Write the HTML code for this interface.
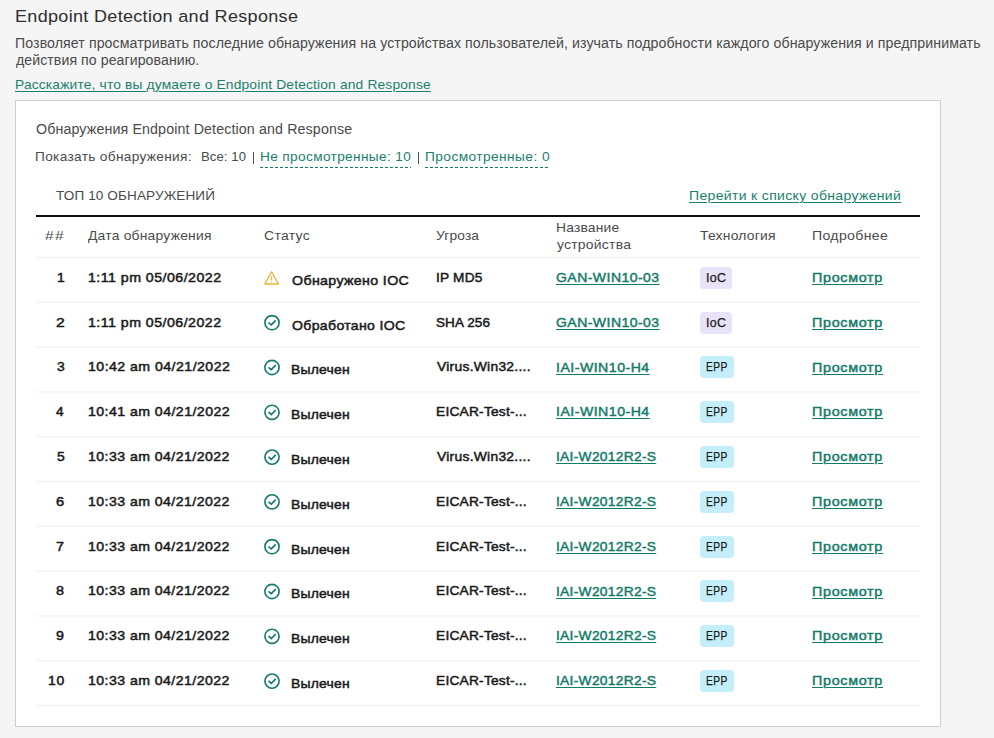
<!DOCTYPE html>
<html><head><meta charset="utf-8"><style>
html,body{margin:0;padding:0;}
body{width:994px;height:738px;background:#f5f5f5;position:relative;overflow:hidden;font-family:"Liberation Sans",sans-serif;}
.t{position:absolute;white-space:nowrap;line-height:1;transform-origin:0 0;}
.ul{text-decoration:underline;text-underline-offset:2px;text-decoration-thickness:1px;}
.card{position:absolute;left:15px;top:100px;width:924px;height:625px;border:1px solid #cfcfcf;background:#fff;}
.sep{position:absolute;left:36px;width:884px;height:1px;background:#efefef;}
.thick{position:absolute;left:36px;top:215px;width:884px;height:2px;background:#111;}
.badge{position:absolute;border-radius:4px;}
.ic{position:absolute;width:20px;height:20px;}
.ov{position:absolute;left:0;top:0;}
.dash{position:absolute;height:1px;background-image:linear-gradient(to right,#127a68 60%,transparent 60%);background-size:5px 1px;}
.bar{position:absolute;width:1px;background:#555;}
</style></head><body>
<div class="card"></div>
<div class="thick"></div>
<div class="dash" style="left:260px;top:167px;width:151px"></div>
<div class="dash" style="left:425px;top:167px;width:125px"></div>
<div class="bar" style="left:253px;top:151.5px;height:12px"></div>
<div class="bar" style="left:418px;top:151.5px;height:12px"></div>
<div class="badge" style="left:700.00px;top:266.70px;width:32px;height:22px;background:#e9e3f9"></div>
<div class="badge" style="left:700.00px;top:311.50px;width:32px;height:22px;background:#e9e3f9"></div>
<div class="badge" style="left:700.00px;top:356.30px;width:34px;height:22px;background:#c5eefb"></div>
<div class="badge" style="left:700.00px;top:401.10px;width:34px;height:22px;background:#c5eefb"></div>
<div class="badge" style="left:700.00px;top:445.90px;width:34px;height:22px;background:#c5eefb"></div>
<div class="badge" style="left:700.00px;top:490.70px;width:34px;height:22px;background:#c5eefb"></div>
<div class="badge" style="left:700.00px;top:535.50px;width:34px;height:22px;background:#c5eefb"></div>
<div class="badge" style="left:700.00px;top:580.30px;width:34px;height:22px;background:#c5eefb"></div>
<div class="badge" style="left:700.00px;top:625.10px;width:34px;height:22px;background:#c5eefb"></div>
<div class="badge" style="left:700.00px;top:669.90px;width:34px;height:22px;background:#c5eefb"></div>
<svg class="ov" width="994" height="738" viewBox="0 0 994 738">
<rect x="36" y="257.00" width="884" height="1" fill="#f0f0f0"/>
<rect x="36" y="301.80" width="884" height="1" fill="#f0f0f0"/>
<rect x="36" y="346.60" width="884" height="1" fill="#f0f0f0"/>
<rect x="36" y="391.40" width="884" height="1" fill="#f0f0f0"/>
<rect x="36" y="436.20" width="884" height="1" fill="#f0f0f0"/>
<rect x="36" y="481.00" width="884" height="1" fill="#f0f0f0"/>
<rect x="36" y="525.80" width="884" height="1" fill="#f0f0f0"/>
<rect x="36" y="570.60" width="884" height="1" fill="#f0f0f0"/>
<rect x="36" y="615.40" width="884" height="1" fill="#f0f0f0"/>
<rect x="36" y="660.20" width="884" height="1" fill="#f0f0f0"/>
<rect x="36" y="705.00" width="884" height="1" fill="#f0f0f0"/>
<path d="M271.6 271.80 L264.8 284.00 L278.4 284.00 Z" fill="none" stroke="#e8b52e" stroke-width="1.3" stroke-linejoin="round"/>
<path d="M271.6 276.20 V280.20" stroke="#e8b52e" stroke-width="1.2"/>
<circle cx="271.6" cy="281.60" r="0.7" fill="#e8b52e"/>
<circle cx="272.0" cy="322.70" r="7.1" fill="none" stroke="#15796b" stroke-width="1.6"/>
<path d="M268.5 322.60 L271.3 324.90 L275.7 320.40" fill="none" stroke="#15796b" stroke-width="1.7"/>
<circle cx="272.0" cy="367.50" r="7.1" fill="none" stroke="#15796b" stroke-width="1.6"/>
<path d="M268.5 367.40 L271.3 369.70 L275.7 365.20" fill="none" stroke="#15796b" stroke-width="1.7"/>
<circle cx="272.0" cy="412.30" r="7.1" fill="none" stroke="#15796b" stroke-width="1.6"/>
<path d="M268.5 412.20 L271.3 414.50 L275.7 410.00" fill="none" stroke="#15796b" stroke-width="1.7"/>
<circle cx="272.0" cy="457.10" r="7.1" fill="none" stroke="#15796b" stroke-width="1.6"/>
<path d="M268.5 457.00 L271.3 459.30 L275.7 454.80" fill="none" stroke="#15796b" stroke-width="1.7"/>
<circle cx="272.0" cy="501.90" r="7.1" fill="none" stroke="#15796b" stroke-width="1.6"/>
<path d="M268.5 501.80 L271.3 504.10 L275.7 499.60" fill="none" stroke="#15796b" stroke-width="1.7"/>
<circle cx="272.0" cy="546.70" r="7.1" fill="none" stroke="#15796b" stroke-width="1.6"/>
<path d="M268.5 546.60 L271.3 548.90 L275.7 544.40" fill="none" stroke="#15796b" stroke-width="1.7"/>
<circle cx="272.0" cy="591.50" r="7.1" fill="none" stroke="#15796b" stroke-width="1.6"/>
<path d="M268.5 591.40 L271.3 593.70 L275.7 589.20" fill="none" stroke="#15796b" stroke-width="1.7"/>
<circle cx="272.0" cy="636.30" r="7.1" fill="none" stroke="#15796b" stroke-width="1.6"/>
<path d="M268.5 636.20 L271.3 638.50 L275.7 634.00" fill="none" stroke="#15796b" stroke-width="1.7"/>
<circle cx="272.0" cy="681.10" r="7.1" fill="none" stroke="#15796b" stroke-width="1.6"/>
<path d="M268.5 681.00 L271.3 683.30 L275.7 678.80" fill="none" stroke="#15796b" stroke-width="1.7"/>
</svg>
<div class="t" style="left:14.60px;top:9.20px;font-size:16.70px;letter-spacing:0.290px;color:#2e2e2e;transform:scaleX(1.0800);">Endpoint Detection and Response</div>
<div class="t" style="left:14.89px;top:36.00px;font-size:14.00px;letter-spacing:0.082px;color:#4a4a4a;transform:scaleX(1.0115);">Позволяет просматривать последние обнаружения на устройствах пользователей, изучать подробности каждого обнаружения и предпринимать</div>
<div class="t" style="left:15.90px;top:52.70px;font-size:14.00px;letter-spacing:0.067px;color:#4a4a4a;transform:scaleX(1.0091);">действия по реагированию.</div>
<div class="t ul" style="left:14.87px;top:77.70px;font-size:13.50px;letter-spacing:0.149px;color:#1b806d;transform:scaleX(1.0227);">Расскажите, что вы думаете о Endpoint Detection and Response</div>
<div class="t" style="left:35.89px;top:121.70px;font-size:14.00px;letter-spacing:0.120px;color:#4a4a4a;transform:scaleX(1.0168);">Обнаружения Endpoint Detection and Response</div>
<div class="t" style="left:34.95px;top:150.30px;font-size:13.00px;letter-spacing:0.327px;color:#4a4a4a;transform:scaleX(1.0487);">Показать обнаружения:</div>
<div class="t" style="left:201.29px;top:150.30px;font-size:13.00px;letter-spacing:0.070px;color:#4a4a4a;transform:scaleX(1.0099);">Все: 10</div>
<div class="t" style="left:260.15px;top:150.30px;font-size:13.00px;letter-spacing:0.341px;color:#1b806d;transform:scaleX(1.0501);">Не просмотренные: 10</div>
<div class="t" style="left:424.94px;top:150.30px;font-size:13.00px;letter-spacing:0.393px;color:#1b806d;transform:scaleX(1.0563);">Просмотренные: 0</div>
<div class="t" style="left:56.00px;top:188.60px;font-size:13.40px;letter-spacing:0.111px;color:#4a4a4a;transform:scaleX(1.0124);">ТОП 10 ОБНАРУЖЕНИЙ</div>
<div class="t ul" style="left:688.95px;top:188.80px;font-size:13.40px;letter-spacing:0.318px;color:#1b806d;transform:scaleX(1.0468);">Перейти к списку обнаружений</div>
<div class="t" style="left:44.50px;top:228.80px;font-size:13.50px;letter-spacing:1.253px;color:#4a4a4a;transform:scaleX(1.1500);">##</div>
<div class="t" style="left:88.00px;top:228.80px;font-size:13.50px;letter-spacing:0.209px;color:#4a4a4a;transform:scaleX(1.0278);">Дата обнаружения</div>
<div class="t" style="left:263.88px;top:228.80px;font-size:13.50px;letter-spacing:0.287px;color:#4a4a4a;transform:scaleX(1.0356);">Статус</div>
<div class="t" style="left:436.29px;top:228.80px;font-size:13.50px;letter-spacing:0.152px;color:#4a4a4a;transform:scaleX(1.0188);">Угроза</div>
<div class="t" style="left:555.87px;top:221.20px;font-size:13.50px;letter-spacing:0.194px;color:#4a4a4a;transform:scaleX(1.0237);">Название</div>
<div class="t" style="left:557.00px;top:238.10px;font-size:13.50px;letter-spacing:0.235px;color:#4a4a4a;transform:scaleX(1.0313);">устройства</div>
<div class="t" style="left:700.09px;top:228.80px;font-size:13.50px;letter-spacing:0.220px;color:#4a4a4a;transform:scaleX(1.0291);">Технология</div>
<div class="t" style="left:811.76px;top:228.80px;font-size:13.50px;letter-spacing:0.342px;color:#4a4a4a;transform:scaleX(1.0416);">Подробнее</div>
<div class="t" style="left:56.61px;top:270.70px;font-size:13.30px;letter-spacing:0.000px;color:#1a1a1a;transform:scaleX(1.0476);-webkit-text-stroke:0.50px #1a1a1a;">1</div>
<div class="t" style="left:88.00px;top:270.70px;font-size:13.30px;letter-spacing:0.432px;color:#1a1a1a;transform:scaleX(1.0674);-webkit-text-stroke:0.50px #1a1a1a;">1:11 pm 05/06/2022</div>
<div class="t" style="left:291.83px;top:273.70px;font-size:13.60px;letter-spacing:0.344px;color:#1a1a1a;transform:scaleX(1.0436);-webkit-text-stroke:0.50px #1a1a1a;">Обнаружено IOC</div>
<div class="t" style="left:435.53px;top:270.70px;font-size:13.30px;letter-spacing:0.210px;color:#1a1a1a;transform:scaleX(1.0250);-webkit-text-stroke:0.50px #1a1a1a;">IP MD5</div>
<div class="t ul" style="left:556.40px;top:271.00px;font-size:13.30px;letter-spacing:0.432px;color:#127a68;transform:scaleX(1.0542);-webkit-text-stroke:0.45px #127a68;">GAN-WIN10-03</div>
<div class="t ul" style="left:811.96px;top:271.00px;font-size:13.30px;letter-spacing:0.629px;color:#127a68;transform:scaleX(1.0796);-webkit-text-stroke:0.45px #127a68;">Просмотр</div>
<div class="t" style="left:705.69px;top:271.90px;font-size:12.00px;letter-spacing:0.277px;color:#1a1a1a;transform:scaleX(1.0327);-webkit-text-stroke:0.25px #1a1a1a;">IoC</div>
<div class="t" style="left:55.69px;top:315.50px;font-size:13.30px;letter-spacing:0.000px;color:#1a1a1a;transform:scaleX(1.1791);-webkit-text-stroke:0.50px #1a1a1a;">2</div>
<div class="t" style="left:88.00px;top:315.50px;font-size:13.30px;letter-spacing:0.432px;color:#1a1a1a;transform:scaleX(1.0674);-webkit-text-stroke:0.50px #1a1a1a;">1:11 pm 05/06/2022</div>
<div class="t" style="left:291.84px;top:318.50px;font-size:13.60px;letter-spacing:0.296px;color:#1a1a1a;transform:scaleX(1.0382);-webkit-text-stroke:0.50px #1a1a1a;">Обработано IOC</div>
<div class="t" style="left:436.15px;top:315.50px;font-size:13.30px;letter-spacing:0.120px;color:#1a1a1a;transform:scaleX(1.0139);-webkit-text-stroke:0.50px #1a1a1a;">SHA 256</div>
<div class="t ul" style="left:556.40px;top:315.80px;font-size:13.30px;letter-spacing:0.432px;color:#127a68;transform:scaleX(1.0542);-webkit-text-stroke:0.45px #127a68;">GAN-WIN10-03</div>
<div class="t ul" style="left:811.96px;top:315.80px;font-size:13.30px;letter-spacing:0.629px;color:#127a68;transform:scaleX(1.0796);-webkit-text-stroke:0.45px #127a68;">Просмотр</div>
<div class="t" style="left:705.69px;top:316.70px;font-size:12.00px;letter-spacing:0.277px;color:#1a1a1a;transform:scaleX(1.0327);-webkit-text-stroke:0.25px #1a1a1a;">IoC</div>
<div class="t" style="left:56.54px;top:360.30px;font-size:13.30px;letter-spacing:0.000px;color:#1a1a1a;transform:scaleX(1.0435);-webkit-text-stroke:0.50px #1a1a1a;">3</div>
<div class="t" style="left:88.00px;top:360.30px;font-size:13.30px;letter-spacing:0.420px;color:#1a1a1a;transform:scaleX(1.0645);-webkit-text-stroke:0.50px #1a1a1a;">10:42 am 04/21/2022</div>
<div class="t" style="left:291.33px;top:363.30px;font-size:13.60px;letter-spacing:0.208px;color:#1a1a1a;transform:scaleX(1.0234);-webkit-text-stroke:0.50px #1a1a1a;">Вылечен</div>
<div class="t" style="left:436.76px;top:360.30px;font-size:13.30px;letter-spacing:0.249px;color:#1a1a1a;transform:scaleX(1.0424);-webkit-text-stroke:0.50px #1a1a1a;">Virus.Win32....</div>
<div class="t ul" style="left:555.76px;top:360.60px;font-size:13.30px;letter-spacing:0.444px;color:#127a68;transform:scaleX(1.0635);-webkit-text-stroke:0.45px #127a68;">IAI-WIN10-H4</div>
<div class="t ul" style="left:811.96px;top:360.60px;font-size:13.30px;letter-spacing:0.629px;color:#127a68;transform:scaleX(1.0796);-webkit-text-stroke:0.45px #127a68;">Просмотр</div>
<div class="t" style="left:706.06px;top:361.30px;font-size:12.20px;letter-spacing:0.571px;color:#1a1a1a;transform:scaleX(0.8400);-webkit-text-stroke:0.25px #1a1a1a;">EPP</div>
<div class="t" style="left:56.45px;top:405.10px;font-size:13.30px;letter-spacing:0.000px;color:#1a1a1a;transform:scaleX(1.0274);-webkit-text-stroke:0.50px #1a1a1a;">4</div>
<div class="t" style="left:88.00px;top:405.10px;font-size:13.30px;letter-spacing:0.415px;color:#1a1a1a;transform:scaleX(1.0637);-webkit-text-stroke:0.50px #1a1a1a;">10:41 am 04/21/2022</div>
<div class="t" style="left:291.33px;top:408.10px;font-size:13.60px;letter-spacing:0.208px;color:#1a1a1a;transform:scaleX(1.0234);-webkit-text-stroke:0.50px #1a1a1a;">Вылечен</div>
<div class="t" style="left:435.72px;top:405.10px;font-size:13.30px;letter-spacing:0.209px;color:#1a1a1a;transform:scaleX(1.0337);-webkit-text-stroke:0.50px #1a1a1a;">EICAR-Test-...</div>
<div class="t ul" style="left:555.76px;top:405.40px;font-size:13.30px;letter-spacing:0.444px;color:#127a68;transform:scaleX(1.0635);-webkit-text-stroke:0.45px #127a68;">IAI-WIN10-H4</div>
<div class="t ul" style="left:811.96px;top:405.40px;font-size:13.30px;letter-spacing:0.629px;color:#127a68;transform:scaleX(1.0796);-webkit-text-stroke:0.45px #127a68;">Просмотр</div>
<div class="t" style="left:706.06px;top:406.10px;font-size:12.20px;letter-spacing:0.571px;color:#1a1a1a;transform:scaleX(0.8400);-webkit-text-stroke:0.25px #1a1a1a;">EPP</div>
<div class="t" style="left:56.54px;top:449.90px;font-size:13.30px;letter-spacing:0.000px;color:#1a1a1a;transform:scaleX(1.0435);-webkit-text-stroke:0.50px #1a1a1a;">5</div>
<div class="t" style="left:88.00px;top:449.90px;font-size:13.30px;letter-spacing:0.410px;color:#1a1a1a;transform:scaleX(1.0629);-webkit-text-stroke:0.50px #1a1a1a;">10:33 am 04/21/2022</div>
<div class="t" style="left:291.33px;top:452.90px;font-size:13.60px;letter-spacing:0.208px;color:#1a1a1a;transform:scaleX(1.0234);-webkit-text-stroke:0.50px #1a1a1a;">Вылечен</div>
<div class="t" style="left:436.76px;top:449.90px;font-size:13.30px;letter-spacing:0.249px;color:#1a1a1a;transform:scaleX(1.0424);-webkit-text-stroke:0.50px #1a1a1a;">Virus.Win32....</div>
<div class="t ul" style="left:555.79px;top:450.20px;font-size:13.30px;letter-spacing:0.273px;color:#127a68;transform:scaleX(1.0370);-webkit-text-stroke:0.45px #127a68;">IAI-W2012R2-S</div>
<div class="t ul" style="left:811.96px;top:450.20px;font-size:13.30px;letter-spacing:0.629px;color:#127a68;transform:scaleX(1.0796);-webkit-text-stroke:0.45px #127a68;">Просмотр</div>
<div class="t" style="left:706.06px;top:450.90px;font-size:12.20px;letter-spacing:0.571px;color:#1a1a1a;transform:scaleX(0.8400);-webkit-text-stroke:0.25px #1a1a1a;">EPP</div>
<div class="t" style="left:56.11px;top:494.70px;font-size:13.30px;letter-spacing:0.000px;color:#1a1a1a;transform:scaleX(1.1029);-webkit-text-stroke:0.50px #1a1a1a;">6</div>
<div class="t" style="left:88.00px;top:494.70px;font-size:13.30px;letter-spacing:0.410px;color:#1a1a1a;transform:scaleX(1.0629);-webkit-text-stroke:0.50px #1a1a1a;">10:33 am 04/21/2022</div>
<div class="t" style="left:291.33px;top:497.70px;font-size:13.60px;letter-spacing:0.208px;color:#1a1a1a;transform:scaleX(1.0234);-webkit-text-stroke:0.50px #1a1a1a;">Вылечен</div>
<div class="t" style="left:435.72px;top:494.70px;font-size:13.30px;letter-spacing:0.209px;color:#1a1a1a;transform:scaleX(1.0337);-webkit-text-stroke:0.50px #1a1a1a;">EICAR-Test-...</div>
<div class="t ul" style="left:555.79px;top:495.00px;font-size:13.30px;letter-spacing:0.273px;color:#127a68;transform:scaleX(1.0370);-webkit-text-stroke:0.45px #127a68;">IAI-W2012R2-S</div>
<div class="t ul" style="left:811.96px;top:495.00px;font-size:13.30px;letter-spacing:0.629px;color:#127a68;transform:scaleX(1.0796);-webkit-text-stroke:0.45px #127a68;">Просмотр</div>
<div class="t" style="left:706.06px;top:495.70px;font-size:12.20px;letter-spacing:0.571px;color:#1a1a1a;transform:scaleX(0.8400);-webkit-text-stroke:0.25px #1a1a1a;">EPP</div>
<div class="t" style="left:56.42px;top:539.50px;font-size:13.30px;letter-spacing:0.000px;color:#1a1a1a;transform:scaleX(1.0746);-webkit-text-stroke:0.50px #1a1a1a;">7</div>
<div class="t" style="left:88.00px;top:539.50px;font-size:13.30px;letter-spacing:0.410px;color:#1a1a1a;transform:scaleX(1.0629);-webkit-text-stroke:0.50px #1a1a1a;">10:33 am 04/21/2022</div>
<div class="t" style="left:291.33px;top:542.50px;font-size:13.60px;letter-spacing:0.208px;color:#1a1a1a;transform:scaleX(1.0234);-webkit-text-stroke:0.50px #1a1a1a;">Вылечен</div>
<div class="t" style="left:435.72px;top:539.50px;font-size:13.30px;letter-spacing:0.209px;color:#1a1a1a;transform:scaleX(1.0337);-webkit-text-stroke:0.50px #1a1a1a;">EICAR-Test-...</div>
<div class="t ul" style="left:555.79px;top:539.80px;font-size:13.30px;letter-spacing:0.273px;color:#127a68;transform:scaleX(1.0370);-webkit-text-stroke:0.45px #127a68;">IAI-W2012R2-S</div>
<div class="t ul" style="left:811.96px;top:539.80px;font-size:13.30px;letter-spacing:0.629px;color:#127a68;transform:scaleX(1.0796);-webkit-text-stroke:0.45px #127a68;">Просмотр</div>
<div class="t" style="left:706.06px;top:540.50px;font-size:12.20px;letter-spacing:0.571px;color:#1a1a1a;transform:scaleX(0.8400);-webkit-text-stroke:0.25px #1a1a1a;">EPP</div>
<div class="t" style="left:56.23px;top:584.30px;font-size:13.30px;letter-spacing:0.000px;color:#1a1a1a;transform:scaleX(1.0870);-webkit-text-stroke:0.50px #1a1a1a;">8</div>
<div class="t" style="left:88.00px;top:584.30px;font-size:13.30px;letter-spacing:0.410px;color:#1a1a1a;transform:scaleX(1.0629);-webkit-text-stroke:0.50px #1a1a1a;">10:33 am 04/21/2022</div>
<div class="t" style="left:291.33px;top:587.30px;font-size:13.60px;letter-spacing:0.208px;color:#1a1a1a;transform:scaleX(1.0234);-webkit-text-stroke:0.50px #1a1a1a;">Вылечен</div>
<div class="t" style="left:435.72px;top:584.30px;font-size:13.30px;letter-spacing:0.209px;color:#1a1a1a;transform:scaleX(1.0337);-webkit-text-stroke:0.50px #1a1a1a;">EICAR-Test-...</div>
<div class="t ul" style="left:555.79px;top:584.60px;font-size:13.30px;letter-spacing:0.273px;color:#127a68;transform:scaleX(1.0370);-webkit-text-stroke:0.45px #127a68;">IAI-W2012R2-S</div>
<div class="t ul" style="left:811.96px;top:584.60px;font-size:13.30px;letter-spacing:0.629px;color:#127a68;transform:scaleX(1.0796);-webkit-text-stroke:0.45px #127a68;">Просмотр</div>
<div class="t" style="left:706.06px;top:585.30px;font-size:12.20px;letter-spacing:0.571px;color:#1a1a1a;transform:scaleX(0.8400);-webkit-text-stroke:0.25px #1a1a1a;">EPP</div>
<div class="t" style="left:56.42px;top:629.10px;font-size:13.30px;letter-spacing:0.000px;color:#1a1a1a;transform:scaleX(1.0746);-webkit-text-stroke:0.50px #1a1a1a;">9</div>
<div class="t" style="left:88.00px;top:629.10px;font-size:13.30px;letter-spacing:0.410px;color:#1a1a1a;transform:scaleX(1.0629);-webkit-text-stroke:0.50px #1a1a1a;">10:33 am 04/21/2022</div>
<div class="t" style="left:291.33px;top:632.10px;font-size:13.60px;letter-spacing:0.208px;color:#1a1a1a;transform:scaleX(1.0234);-webkit-text-stroke:0.50px #1a1a1a;">Вылечен</div>
<div class="t" style="left:435.72px;top:629.10px;font-size:13.30px;letter-spacing:0.209px;color:#1a1a1a;transform:scaleX(1.0337);-webkit-text-stroke:0.50px #1a1a1a;">EICAR-Test-...</div>
<div class="t ul" style="left:555.79px;top:629.40px;font-size:13.30px;letter-spacing:0.273px;color:#127a68;transform:scaleX(1.0370);-webkit-text-stroke:0.45px #127a68;">IAI-W2012R2-S</div>
<div class="t ul" style="left:811.96px;top:629.40px;font-size:13.30px;letter-spacing:0.629px;color:#127a68;transform:scaleX(1.0796);-webkit-text-stroke:0.45px #127a68;">Просмотр</div>
<div class="t" style="left:706.06px;top:630.10px;font-size:12.20px;letter-spacing:0.571px;color:#1a1a1a;transform:scaleX(0.8400);-webkit-text-stroke:0.25px #1a1a1a;">EPP</div>
<div class="t" style="left:48.01px;top:673.90px;font-size:13.30px;letter-spacing:0.668px;color:#1a1a1a;transform:scaleX(1.0509);-webkit-text-stroke:0.50px #1a1a1a;">10</div>
<div class="t" style="left:88.00px;top:673.90px;font-size:13.30px;letter-spacing:0.410px;color:#1a1a1a;transform:scaleX(1.0629);-webkit-text-stroke:0.50px #1a1a1a;">10:33 am 04/21/2022</div>
<div class="t" style="left:291.33px;top:676.90px;font-size:13.60px;letter-spacing:0.208px;color:#1a1a1a;transform:scaleX(1.0234);-webkit-text-stroke:0.50px #1a1a1a;">Вылечен</div>
<div class="t" style="left:435.72px;top:673.90px;font-size:13.30px;letter-spacing:0.209px;color:#1a1a1a;transform:scaleX(1.0337);-webkit-text-stroke:0.50px #1a1a1a;">EICAR-Test-...</div>
<div class="t ul" style="left:555.79px;top:674.20px;font-size:13.30px;letter-spacing:0.273px;color:#127a68;transform:scaleX(1.0370);-webkit-text-stroke:0.45px #127a68;">IAI-W2012R2-S</div>
<div class="t ul" style="left:811.96px;top:674.20px;font-size:13.30px;letter-spacing:0.629px;color:#127a68;transform:scaleX(1.0796);-webkit-text-stroke:0.45px #127a68;">Просмотр</div>
<div class="t" style="left:706.06px;top:674.90px;font-size:12.20px;letter-spacing:0.571px;color:#1a1a1a;transform:scaleX(0.8400);-webkit-text-stroke:0.25px #1a1a1a;">EPP</div>
</body></html>
